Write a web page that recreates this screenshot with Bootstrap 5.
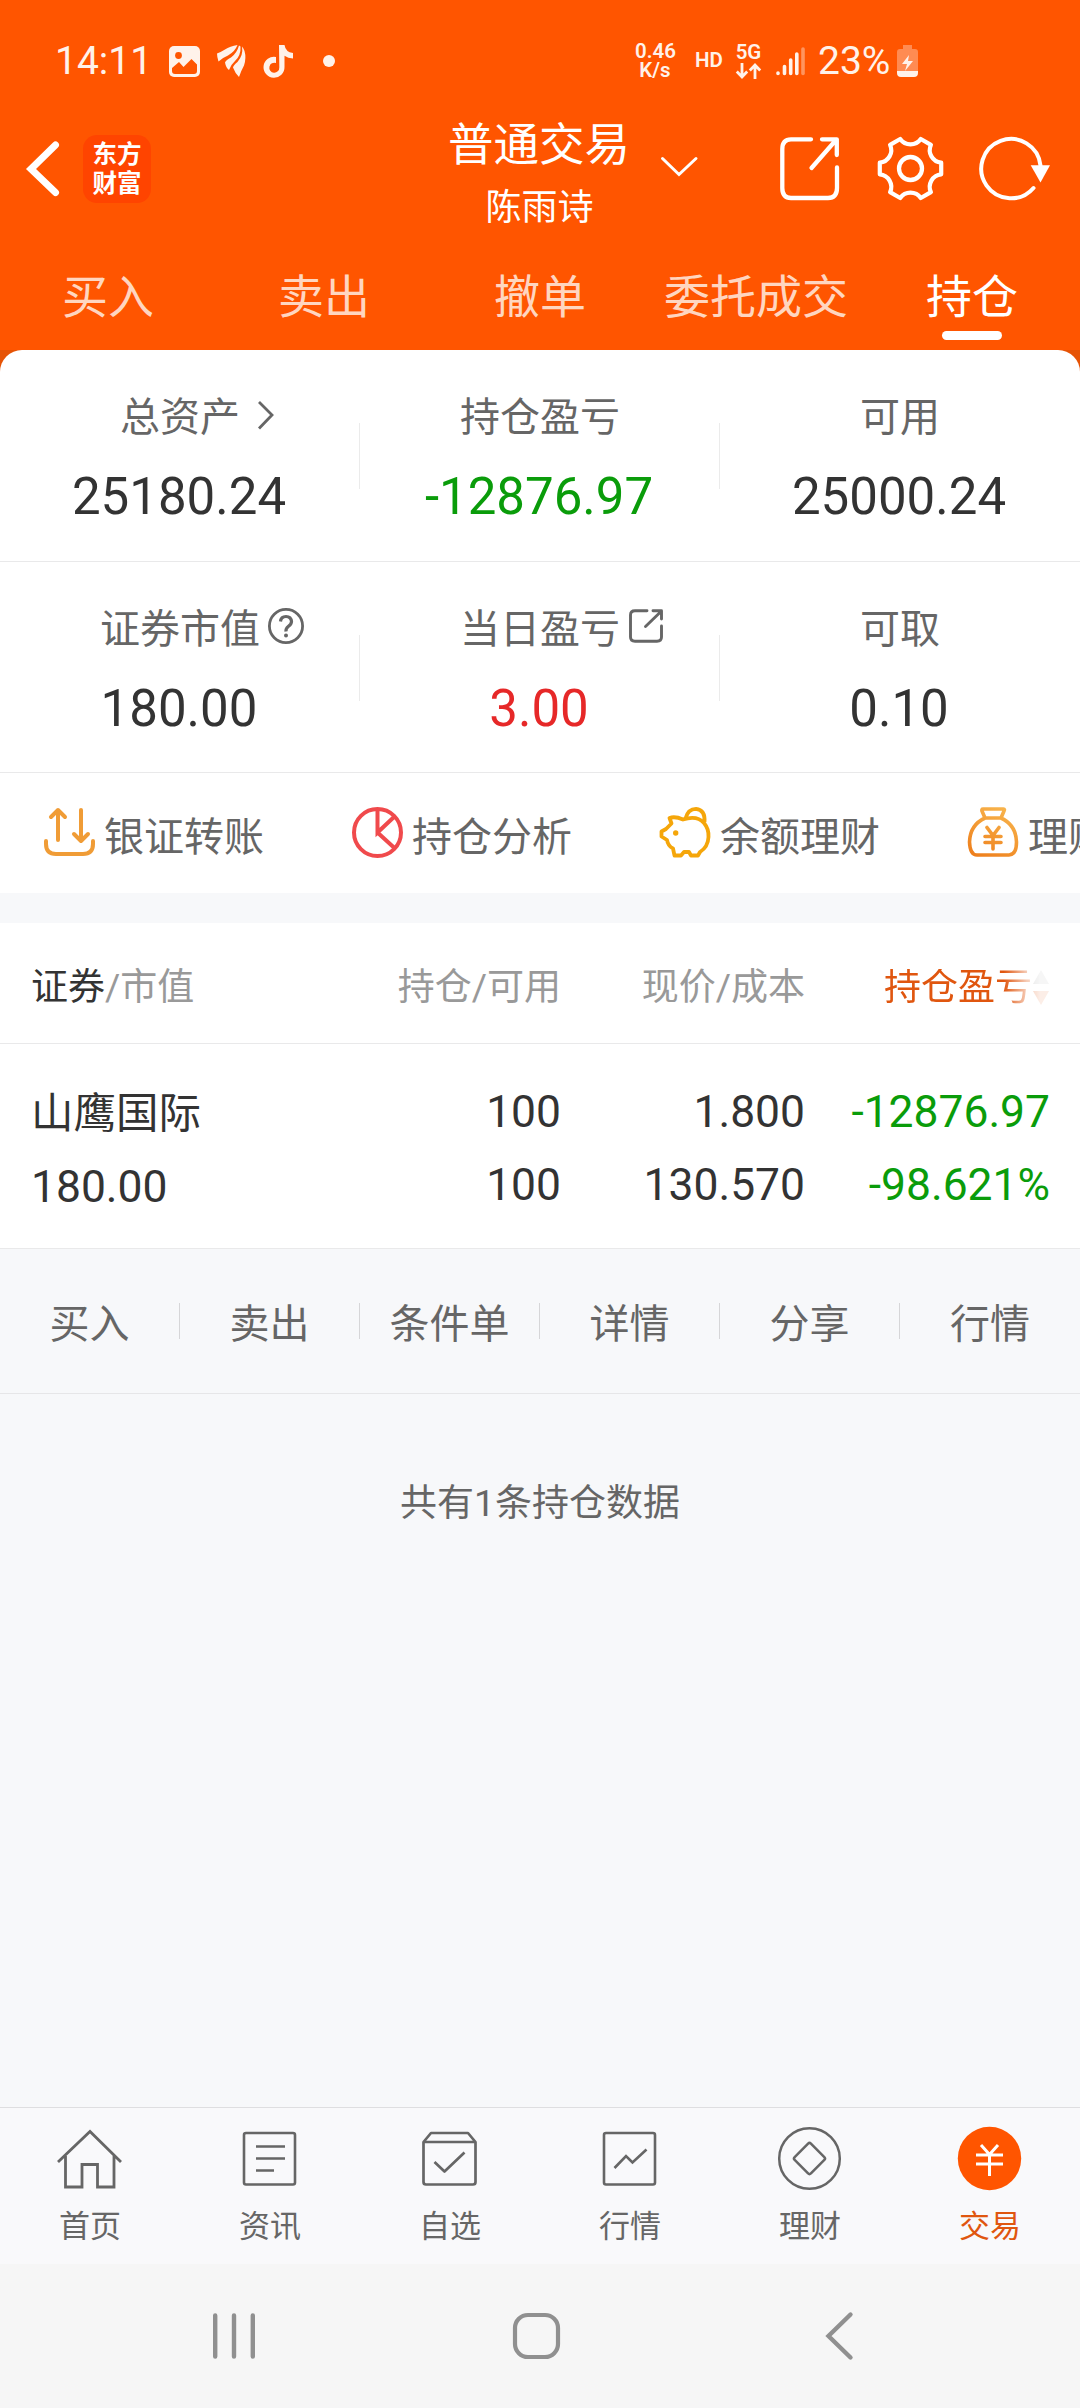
<!DOCTYPE html>
<html lang="zh-CN">
<head>
<meta charset="utf-8">
<meta name="viewport" content="width=device-width, initial-scale=1">
<title>普通交易 - 持仓</title>
<link href="https://cdn.jsdelivr.net/npm/bootstrap@5.3.0/dist/css/bootstrap.min.css" rel="stylesheet">
<style>
:root { --brand:#ff5500; --ink:#333; --dim:#666; --pale:#999; --rule:#e9e9ea; --fall:#0a9c0a; --rise:#e62828; }
body { width:1080px; height:2408px; overflow:hidden; background:#f7f8fa; color:var(--ink); font-family:Roboto,"Noto Sans CJK SC",sans-serif; font-size:40px; line-height:1; }
svg { display:block; flex:none; fill:none; stroke:currentColor; overflow:visible; }
.fill { fill:currentColor; stroke:none; }
a { color:inherit; text-decoration:none; }
.top { background:var(--brand); color:#fff; }
.status { height:110px; padding-top:36px; color:#fff2ea; }
.status > div { height:50px; }
.notif { width:635px; padding-left:55px; }
.clock { width:114px; font-size:39px; }
.tiny { font-size:20.5px; line-height:19.5px; font-weight:600; }
.pct { font-size:39px; width:78px; }
.bar { height:118px; }
.brandmark { width:68px; height:68px; margin-left:24px; border-radius:14px; background:#ff4400; font:700 24.5px/29px "Noto Sans CJK SC",sans-serif; }
.brandmark span { margin-top:-5px; }
.heading { width:182px; margin-left:299px; padding-top:8px; }
.heading h1 { font-size:45.5px; line-height:56px; font-weight:400; margin:0 0 0 -4px; white-space:nowrap; }
.heading p { font-size:36px; line-height:44px; margin:12px 0 0 -3px; }
.tabs { height:122px; font-size:46px; }
.tabs .nav-link { width:216px; padding:42px 0 0; color:#ffd6c0; line-height:54px; border:0; }
.tabs .nav-link.active { color:#fff; }
.tabs .nav-link.active::after { content:""; display:block; width:60px; height:9px; border-radius:4.5px; background:#fff; margin:7px auto 0; }
.corner { background:#e65305; }
.assets { background:#fff; border-radius:22px 22px 0 0; }
.assets .cell { height:211px; padding-top:45px; border-bottom:1px solid var(--rule); }
.assets .cell.r1 { height:212px; }
.assets .cell + .cell::before { content:""; float:left; width:1px; height:66px; background:#ebebeb; margin:28px 0 0 -1px; }
.assets .cell.first::before { display:none; }
.lbl { height:46px; line-height:46px; color:var(--dim); }
.amt { font-size:51px; line-height:60px; margin-top:26px; padding-right:2px; }
.hang { display:inline-block; vertical-align:top; }
.fall { color:var(--fall); } .rise { color:var(--rise); }
.quick { height:120px; padding-left:43px; background:#fff; color:var(--dim); overflow:hidden; }
.quick a { width:308px; flex:none; white-space:nowrap; }
.quick span { margin-left:8px; padding-top:9px; }
.thead { height:121px; padding-top:9px; margin-top:30px; background:#fff; border-bottom:1px solid var(--rule); color:var(--pale); font-size:37px; }
.grid4 { display:grid; grid-template-columns:280px 250px 244px 245px; padding-left:31px; text-align:right; white-space:nowrap; }
.grid4 > :first-child { text-align:left; }
.sorted { color:#e0560f; -webkit-mask-image:linear-gradient(90deg,#000 72%,rgba(0,0,0,.3) 86%,rgba(0,0,0,.1) 94%); mask-image:linear-gradient(90deg,#000 72%,rgba(0,0,0,.3) 86%,rgba(0,0,0,.1) 94%); }
.holding { height:205px; padding-top:42px; background:#fff; border-bottom:1px solid var(--rule); font-size:44.4px; }
.holding .grid4 > div > div { line-height:52px; height:52px; }
.holding .grid4 > div > div + div { margin-top:21px; }
.holding .grid4 > :first-child { padding-top:2px; }
.holding .stock { font-size:42.5px; }
.acts { height:145px; border-bottom:1px solid #e6e6e8; color:var(--dim); }
.acts a { height:36px; line-height:43px; border-right:1px solid #d6d6d8; }
.acts a:last-child { border:0; }
.note { margin-top:86px; font-size:37px; line-height:48px; color:var(--dim); }
.tabbar { height:157px; background:#f9f9fb; border-top:1px solid #dedee0; color:var(--dim); font-size:31px; padding-top:19px; }
.tabbar a { flex:1; }
.tabbar span { line-height:36px; margin-top:18px; }
.tabbar .on { color:#e0560f; }
.sysnav { height:144px; background:#f6f6f6; color:#909090; padding-left:213px; }
</style>
</head>
<body class="d-flex flex-column">
<header class="top">
  <div class="status d-flex align-items-start">
    <div class="notif d-flex align-items-center">
      <span class="clock">14:11</span>
      <svg width="31" height="31" viewBox="0 0 31 31"><rect class="fill" width="31" height="31" rx="5"/><g style="fill:#ff5500;stroke:none"><circle cx="9.5" cy="9.5" r="3.4"/><path d="M3 22l7-6 4.500 5L22.500 13 28 18.500V25q0 3-3 3H6q-3 0-3-3z"/></g></svg>
      <svg width="29" height="32" viewBox="0 0 29 32" style="margin-left:17px"><path class="fill" d="M0 8.500Q4 7 8 4.500 13 1 20.500 0 18 6.500 11 10.500 5 13 1.500 16.500 0 12 0 8.500ZM22 .5Q20 8 14 12.500 9 15 8 17.500 9 23 12 25 14 19.500 18 16 24 10.500 23.500 1.500ZM25 1.500Q26.500 10 20.500 17 16.500 20 16 22.500 18 28 22 32 24 26 27 20.500 29.500 13 27.500 6 26.500 3 25 1.500Z"/></svg>
      <svg width="29" height="33" viewBox="0 0 29 33" style="margin-left:18px"><path class="fill" d="M15 0h5.500q1 7 8.500 8v5.500q-5-.3-8.500-2.800V22A10.500 10.500 0 1 1 12 12v6a5 5 0 1 0 3.300 4.500z"/></svg>
      <svg width="12" height="12" viewBox="0 0 12 12" style="margin-left:30px"><circle class="fill" cx="6" cy="6" r="6"/></svg>
    </div>
    <div class="d-flex align-items-center">
      <div class="tiny text-center" style="width:40px">0.46<br>K/s</div>
      <div class="tiny text-center" style="width:27px;margin-left:20px">HD</div>
      <div class="tiny text-center d-flex flex-column align-items-center" style="width:27px;margin-left:13px"><span>5G</span><svg width="25" height="16" viewBox="0 0 25 16" stroke-width="2.800"><path d="M6 0v14M.8 8.500l5.200 5.500 5.200-5.500M19 16V1.500M13.800 7.500L19 2l5.200 5.500"/></svg></div>
      <svg width="29" height="30" viewBox="0 0 29 30" style="margin-left:14px" stroke-width="3.600" stroke-linecap="round"><path d="M2 27.500v-.5M8.500 27.500v-7M14.700 27.500V14M20.800 27.500V8"/><path opacity=".4" d="M27 27.500V3"/></svg>
      <span class="pct" style="margin-left:13px">23%</span>
      <svg width="21" height="32" viewBox="0 0 21 32" style="margin-left:1px"><path class="fill" opacity=".35" d="M6 0h9v4h3q3 0 3 3v19H0V7q0-3 3-3h3z"/><path class="fill" d="M0 26h21v2q0 4-4 4H4q-4 0-4-4zM12 10L5 19h5l-2 7 8-10h-5z"/></svg>
    </div>
  </div>
  <div class="bar d-flex">
    <div class="d-flex align-items-center">
      <svg width="32" height="56" viewBox="27 141 32 56" style="margin-left:27px" stroke-width="7" stroke-linecap="round"><path d="M55.500 145L31 169 55.500 192.500"/></svg>
      <div class="brandmark d-flex align-items-center text-center"><span class="w-100">东方<br>财富</span></div>
    </div>
    <div class="heading text-center"><h1>普通交易</h1><p>陈雨诗</p></div>
    <div class="d-flex align-items-center">
      <svg width="36" height="20" viewBox="663 159 36 20" style="margin-left:30px" stroke-width="3" stroke-linecap="round"><path d="M663.500 158.500L680 174.500 697 158.500"/></svg>
      <svg width="60" height="64" viewBox="780 137 60 64" style="margin-left:82px" stroke-width="4.300" stroke-linecap="round" stroke-linejoin="round"><path d="M811 139.300H791Q782.300 139.300 782.300 149V188Q782.300 198 791 198H828Q837 198 837 188V167.500M811.500 168L836 140M822 139.300H836.800V155"/></svg>
      <svg width="67" height="66" viewBox="-33.500 -32.500 67 66" style="margin-left:37px" stroke-width="4.300" stroke-linejoin="round"><path transform="scale(.975)" d="M31.500-6A12.900 12.900 0 0 1 20.950-24.280L10.550-30.280A12.900 12.900 0 0 1-10.550-30.280L-20.950-24.280A12.900 12.900 0 0 1-31.500-6V6A12.900 12.900 0 0 1-20.950 24.280L-10.550 30.280A12.900 12.900 0 0 1 10.550 30.280L20.950 24.280A12.900 12.900 0 0 1 31.500 6Z"/><circle r="11.500"/></svg>
      <svg width="72" height="66" viewBox="979 135.500 72 66" style="margin-left:35px" stroke-width="4" stroke-linecap="round"><path d="M1040.500 165A29.700 29.700 0 1 0 1033.500 187.500"/><path class="fill" d="M1030.700 164.700h19.300l-9.500 17.300z"/></svg>
    </div>
  </div>
  <nav class="tabs nav text-center flex-nowrap">
    <a class="nav-link" href="#">买入</a><a class="nav-link" href="#">卖出</a><a class="nav-link" href="#">撤单</a><a class="nav-link" href="#">委托成交</a><a class="nav-link active" href="#">持仓</a>
  </nav>
</header>
<main class="flex-grow-1">
  <div class="corner">
    <section class="assets row g-0 text-center">
      <div class="cell r1 first col-4"><div class="lbl">总资产<svg class="hang" width="16" height="30" viewBox="258 400 16 30" style="margin:5px -34px 0 18px" stroke-width="2.800"><path d="M259 402l13 13L259 428.500"/></svg></div><div class="amt">25180.24</div></div>
      <div class="cell r1 col-4"><div class="lbl">持仓盈亏</div><div class="amt fall">-12876.97</div></div>
      <div class="cell r1 col-4"><div class="lbl">可用</div><div class="amt">25000.24</div></div>
      <div class="cell first col-4"><div class="lbl">证券市值<svg class="hang" width="36" height="36" viewBox="0 0 36 36" style="margin:1px -44px 0 8px" stroke-width="2.800"><circle cx="18" cy="18" r="16.600"/><path stroke-width="3.200" d="M12.500 13.500Q13 8.500 18 8.500T23.500 13.500Q23.500 16 20.500 18.300T18 23.500"/><circle class="fill" cx="18" cy="27.500" r="2"/></svg></div><div class="amt">180.00</div></div>
      <div class="cell col-4"><div class="lbl">当日盈亏<svg class="hang" width="35" height="34" viewBox="629 608 35 34" style="margin:2px -44px 0 9px" stroke-width="2.900" stroke-linecap="round" stroke-linejoin="round"><path d="M647 609.800H635Q630.500 609.800 630.500 614V636Q630.500 640.200 635 640.200H657Q661.500 640.200 661.500 636V625M645.500 625.500L661 610.500M653 609.800H661.500V618"/></svg></div><div class="amt rise">3.00</div></div>
      <div class="cell col-4"><div class="lbl">可取</div><div class="amt">0.10</div></div>
    </section>
  </div>
  <nav class="quick d-flex align-items-center">
    <a class="d-flex align-items-center" href="#"><svg width="53" height="52" viewBox="43 807 53 52" style="color:#f09c36" stroke-width="4" stroke-linecap="round" stroke-linejoin="round"><path d="M58 840V810M51 817l7-7 7 7M81 810v30M74 834l7 7 7-7M46 841v3q0 10 10 10H83q10 0 10-10v-3"/></svg><span>银证转账</span></a>
    <a class="d-flex align-items-center" href="#"><svg width="53" height="52" viewBox="351 807 53 52" style="color:#f04a4c" stroke-width="4"><circle cx="377.500" cy="832.500" r="23.500"/><path d="M377.500 809V832.500L394.500 816.500M377.500 832.500L395 848.500"/></svg><span>持仓分析</span></a>
    <a class="d-flex align-items-center" href="#"><svg width="53" height="52" viewBox="659 807 53 52" style="color:#f5a60a" stroke-width="3.800" stroke-linejoin="round"><path d="M669.500 818Q675 816 683 819.500 697 815 704 823 709 829 708.500 837 708 847 700 852L698 855.500H691L689 852H684L681 855.500H674.500L673 848.500Q668 846 667 840L661.500 836.500V831.500L666 829 671.500 823.500Z"/><path d="M685.500 818.500Q688 808.800 696 808.800 705.500 810 704.500 822"/><circle class="fill" cx="675.700" cy="833" r="2.700"/></svg><span>余额理财</span></a>
    <a class="d-flex align-items-center" href="#"><svg width="53" height="52" viewBox="967 807 53 52" style="stroke:url(#gold)" stroke-width="3.600" stroke-linejoin="round" stroke-linecap="round"><defs><linearGradient id="gold" gradientUnits="userSpaceOnUse" x1="1005" y1="808" x2="980" y2="858"><stop stop-color="#f8b44c"/><stop offset="1" stop-color="#ee7f1c"/></linearGradient></defs><path d="M983 809H1003.500Q1005 809 1004 811L1001 818H985L982 811Q981.500 809 983 809ZM985 818Q970 825 969.500 842 970 855 977 855H1009Q1016.500 855 1016.500 842 1016 825 1001 818M987 827.500L993 835.500 999 827.500M993 836V849M985 836.500H1001M985 842.500H1001"/></svg><span>理财</span></a>
  </nav>
  <section>
    <div class="thead d-flex align-items-center">
      <div class="grid4">
        <div><span style="color:#333">证券</span>/市值</div><div>持仓/可用</div><div>现价/成本</div>
        <div><span class="sorted d-inline-flex align-items-center">持仓盈亏<svg width="18" height="36" viewBox="0 0 18 36"><path style="fill:#aaa;stroke:none" d="M9 0l8 14H1z"/><path class="fill" d="M9 35l8-14H1z"/></svg></span></div>
      </div>
    </div>
    <div class="holding">
      <div class="grid4">
        <div><div class="stock">山鹰国际</div><div>180.00</div></div>
        <div><div>100</div><div>100</div></div>
        <div><div>1.800</div><div>130.570</div></div>
        <div class="fall"><div>-12876.97</div><div>-98.621%</div></div>
      </div>
    </div>
    <nav class="acts row g-0 text-center align-items-center">
      <a class="col-2" href="#">买入</a><a class="col-2" href="#">卖出</a><a class="col-2" href="#">条件单</a><a class="col-2" href="#">详情</a><a class="col-2" href="#">分享</a><a class="col-2" href="#">行情</a>
    </nav>
    <p class="note text-center">共有1条持仓数据</p>
  </section>
</main>
<nav class="tabbar d-flex">
  <a class="d-flex flex-column align-items-center" href="#"><svg width="66" height="64" viewBox="57 2127 66 64" stroke-width="2.800"><path d="M58 2162L90 2131.500 121 2162M65.500 2156V2187H82V2164.500H97.500V2187H114V2156"/></svg><span>首页</span></a>
  <a class="d-flex flex-column align-items-center" href="#"><svg width="66" height="64" viewBox="237 2127 66 64" stroke-width="2.600"><rect x="244" y="2133" width="51" height="51.500" rx="2"/><path d="M256 2146.500H285M256 2158.500H285M256 2170.500H274"/></svg><span>资讯</span></a>
  <a class="d-flex flex-column align-items-center" href="#"><svg width="66" height="64" viewBox="417 2127 66 64" stroke-width="2.700" stroke-linejoin="round"><path d="M423.500 2142L431 2133H468L475.500 2142V2182Q475.500 2184.500 473 2184.500H426Q423.500 2184.500 423.500 2182ZM423.500 2142H475.500M434.500 2162L444.500 2171.500 464.500 2152.500"/></svg><span>自选</span></a>
  <a class="d-flex flex-column align-items-center" href="#"><svg width="66" height="64" viewBox="597 2127 66 64" stroke-width="2.600"><rect x="604" y="2133" width="51" height="51.500" rx="2"/><path d="M614.500 2168L626 2156 632.500 2162.500 646.500 2149.500"/></svg><span>行情</span></a>
  <a class="d-flex flex-column align-items-center" href="#"><svg width="66" height="64" viewBox="777 2127 66 64" stroke-width="2.500"><circle cx="809.500" cy="2158.500" r="30.300"/><rect x="798" y="2147" width="23" height="23" rx="2" transform="rotate(45 809.500 2158.500)"/></svg><span>理财</span></a>
  <a class="on d-flex flex-column align-items-center" href="#"><svg width="66" height="64" viewBox="957 2127 66 64" stroke-width="3"><circle cx="989.500" cy="2158.500" r="31.700" style="fill:#ff5500;stroke:none"/><path stroke="#fff" style="stroke:#fff" d="M981 2145L989.500 2154.500 998 2145M989.500 2154V2176M976 2155H1003M976 2164H1003"/></svg><span>交易</span></a>
</nav>
<footer class="sysnav d-flex align-items-center">
  <svg width="42" height="48" viewBox="0 0 42 48" stroke-width="4.400" stroke-linecap="round"><path d="M2.200 3.500V44.500M21 3.500V44.500M39.800 3.500V44.500"/></svg>
  <svg width="48" height="48" viewBox="0 0 48 48" style="margin-left:257px" stroke-width="4.200"><rect x="3" y="3" width="43" height="42" rx="13"/></svg>
  <svg width="27" height="48" viewBox="0 0 27 48" style="margin-left:266px" stroke-width="4.400" stroke-linecap="round"><path d="M24.500 2.500L2.500 24 24.500 45.500"/></svg>
</footer>
<script src="https://cdn.jsdelivr.net/npm/bootstrap@5.3.0/dist/js/bootstrap.bundle.min.js"></script>
</body>
</html>
